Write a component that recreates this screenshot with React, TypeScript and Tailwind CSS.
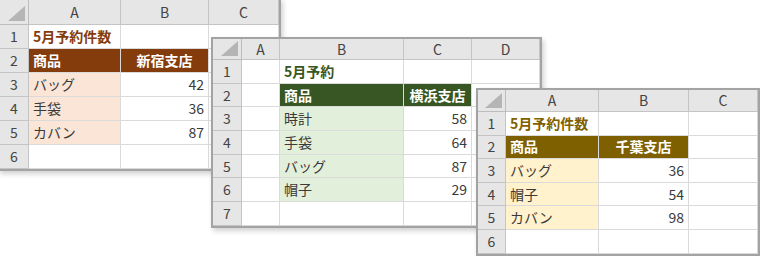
import React from 'react'

type Cell = {
  text?: string
  kind?: 'title' | 'head' | 'fill' | 'num' | 'plain'
  align?: 'left' | 'center' | 'right'
}

interface SheetProps {
  pos: string
  cols: string
  rows: string
  letters: string[]
  data: Cell[][]
  accent: { title: string; head: string; fill: string }
}

const font = { fontFamily: '"Noto Sans CJK JP", "Noto Sans", sans-serif' }

function Corner() {
  return (
    <div className="bg-[#e6e6e6] border-r border-b border-[#bdbdbd] flex items-end justify-end p-[3px]">
      <svg width="17" height="15" viewBox="0 0 17 15">
        <polygon points="17,0 17,15 0,15" fill="#b5b5b5" />
      </svg>
    </div>
  )
}

function Sheet({ pos, cols, rows, letters, data, accent }: SheetProps) {
  return (
    <div
      className={`absolute ${pos} bg-white border-2 border-[#a3a3a3] shadow-[2px_3px_5px_rgba(0,0,0,0.18)] grid ${cols} ${rows} overflow-hidden`}
      style={font}
    >
      <Corner />
      {letters.map((l) => (
        <div
          key={l}
          className="bg-[#e6e6e6] border-r border-b border-[#c4c4c4] flex items-center justify-center text-[14px] text-[#444]"
        >
          {l}
        </div>
      ))}
      {data.map((row, r) => (
        <React.Fragment key={r}>
          <div className="bg-[#e6e6e6] border-r border-b border-[#c4c4c4] flex items-center justify-center text-[14px] text-[#444]">
            {r + 1}
          </div>
          {letters.map((_, c) => {
            const cell = row[c] ?? {}
            const k = cell.kind ?? 'plain'
            let cls = 'border-r border-b border-[#dadada] flex items-center px-[4px] text-[14px] whitespace-nowrap '
            if (k === 'title') cls += `font-bold ${accent.title}`
            if (k === 'head') cls += `font-bold text-white ${accent.head} border-[#bfbfbf]`
            if (k === 'fill') cls += `text-[#3a3a3a] ${accent.fill} border-[#bfbfbf]`
            if (k === 'num') cls += 'text-[#3a3a3a] border-[#bfbfbf]'
            const a = cell.align ?? (k === 'num' ? 'right' : 'left')
            cls += a === 'right' ? ' justify-end' : a === 'center' ? ' justify-center' : ' justify-start'
            return (
              <div key={c} className={cls}>
                {cell.text}
              </div>
            )
          })}
        </React.Fragment>
      ))}
    </div>
  )
}

export default function App() {
  return (
    <div className="relative w-[760px] h-[256px] bg-white overflow-hidden">
      <Sheet
        pos="left-[-2px] top-[-2px]"
        cols="grid-cols-[29px_92px_88px_70px]"
        rows="grid-rows-[25px_repeat(6,24px)]"
        letters={['A', 'B', 'C']}
        accent={{ title: 'text-[#843c0c]', head: 'bg-[#843c0c]', fill: 'bg-[#fbe5d6]' }}
        data={[
          [{ text: '5月予約件数', kind: 'title' }],
          [{ text: '商品', kind: 'head' }, { text: '新宿支店', kind: 'head', align: 'center' }],
          [{ text: 'バッグ', kind: 'fill' }, { text: '42', kind: 'num' }],
          [{ text: '手袋', kind: 'fill' }, { text: '36', kind: 'num' }],
          [{ text: 'カバン', kind: 'fill' }, { text: '87', kind: 'num' }],
          [],
        ]}
      />
      <Sheet
        pos="left-[211px] top-[37px]"
        cols="grid-cols-[29px_38px_124px_68px_68px]"
        rows="grid-rows-[21px_repeat(7,23.7px)]"
        letters={['A', 'B', 'C', 'D']}
        accent={{ title: 'text-[#375623]', head: 'bg-[#375623]', fill: 'bg-[#e2efda]' }}
        data={[
          [{}, { text: '5月予約', kind: 'title' }],
          [{}, { text: '商品', kind: 'head' }, { text: '横浜支店', kind: 'head', align: 'center' }],
          [{}, { text: '時計', kind: 'fill' }, { text: '58', kind: 'num' }],
          [{}, { text: '手袋', kind: 'fill' }, { text: '64', kind: 'num' }],
          [{}, { text: 'バッグ', kind: 'fill' }, { text: '87', kind: 'num' }],
          [{}, { text: '帽子', kind: 'fill' }, { text: '29', kind: 'num' }],
          [],
        ]}
      />
      <Sheet
        pos="left-[476px] top-[88px]"
        cols="grid-cols-[28px_93px_90px_69px]"
        rows="grid-rows-[22px_repeat(6,23.6px)]"
        letters={['A', 'B', 'C']}
        accent={{ title: 'text-[#7f6000]', head: 'bg-[#7f6000]', fill: 'bg-[#fff2cc]' }}
        data={[
          [{ text: '5月予約件数', kind: 'title' }],
          [{ text: '商品', kind: 'head' }, { text: '千葉支店', kind: 'head', align: 'center' }],
          [{ text: 'バッグ', kind: 'fill' }, { text: '36', kind: 'num' }],
          [{ text: '帽子', kind: 'fill' }, { text: '54', kind: 'num' }],
          [{ text: 'カバン', kind: 'fill' }, { text: '98', kind: 'num' }],
          [],
        ]}
      />
    </div>
  )
}
